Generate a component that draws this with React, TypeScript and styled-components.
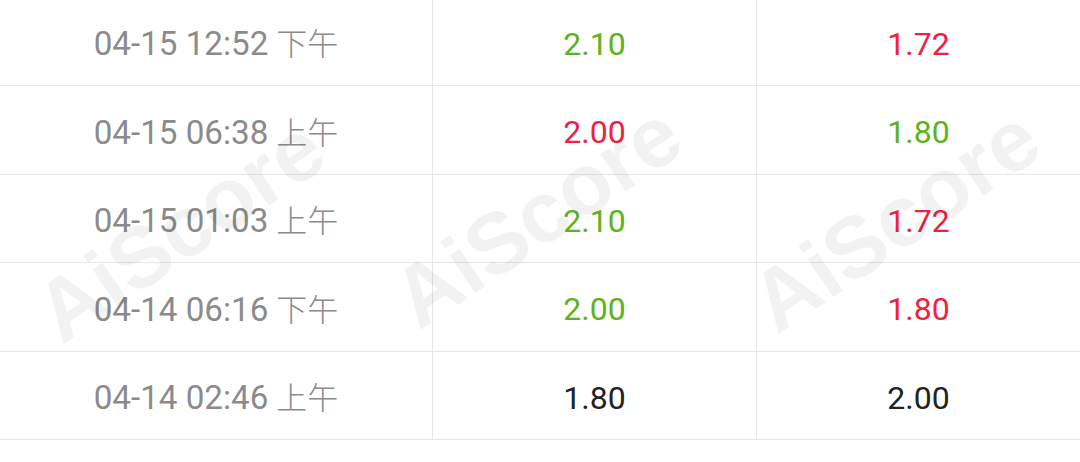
import React from "react";
import styled, { createGlobalStyle } from "styled-components";

const Global = createGlobalStyle`
  html, body { margin: 0; padding: 0; background: #ffffff; }
  body { width: 1080px; height: 462px; overflow: hidden; }
`;

const Page = styled.div`
  position: relative;
  width: 1080px;
  height: 462px;
  overflow: hidden;
  background: #fff;
`;

const Table = styled.div`
  display: flex;
  flex-direction: column;
  margin-top: -2.5px;
`;

const Row = styled.div`
  display: grid;
  grid-template-columns: 432px 324px 324px;
  height: 88.5px;
  box-sizing: border-box;
  border-bottom: 1px solid #e6e6e6;
`;

type Tone = "time" | "up" | "down" | "plain";

const toneColor: Record<Tone, string> = {
  time: "#8b8b8b",
  up: "#5cb320",
  down: "#f2203f",
  plain: "#222222",
};

const Cell = styled.div<{ $tone: Tone; $divider?: boolean }>`
  display: flex;
  align-items: center;
  justify-content: center;
  gap: 8px;
  padding-top: 5px;
  box-sizing: border-box;
  border-left: ${(p) => (p.$divider ? "1px solid #e6e6e6" : "none")};
  font-family: Roboto, "Noto Sans CJK SC", sans-serif;
  font-size: ${(p) => (p.$tone === "time" ? "33.2px" : "32px")};
  color: ${(p) => toneColor[p.$tone]};
  white-space: nowrap;
`;

const Meridiem = styled.span`
  font-family: "Noto Sans CJK SC", sans-serif;
  font-size: 31px;
  font-weight: 300;
  position: relative;
  top: -2px;
`;

const Watermark = styled.span<{ $x: number; $y: number }>`
  position: absolute;
  left: ${(p) => p.$x}px;
  top: ${(p) => p.$y}px;
  transform: translate(-50%, -50%) rotate(-34deg);
  font-family: "Liberation Sans", Arial, sans-serif;
  font-weight: 700;
  font-size: 86px;
  color: rgba(0, 0, 0, 0.05);
  pointer-events: none;
  white-space: nowrap;
`;

const rows: { time: string; ap: string; a: string; at: Tone; b: string; bt: Tone }[] = [
  { time: "04-15 12:52", ap: "下午", a: "2.10", at: "up", b: "1.72", bt: "down" },
  { time: "04-15 06:38", ap: "上午", a: "2.00", at: "down", b: "1.80", bt: "up" },
  { time: "04-15 01:03", ap: "上午", a: "2.10", at: "up", b: "1.72", bt: "down" },
  { time: "04-14 06:16", ap: "下午", a: "2.00", at: "up", b: "1.80", bt: "down" },
  { time: "04-14 02:46", ap: "上午", a: "1.80", at: "plain", b: "2.00", bt: "plain" },
];

export default function App() {
  return (
    <Page>
      <Global />
      <Table>
        {rows.map((r, i) => (
          <Row key={i}>
            <Cell $tone="time">
              <span>{r.time}</span>
              <Meridiem>{r.ap}</Meridiem>
            </Cell>
            <Cell $tone={r.at} $divider>
              {r.a}
            </Cell>
            <Cell $tone={r.bt} $divider>
              {r.b}
            </Cell>
          </Row>
        ))}
      </Table>
      <Watermark $x={180} $y={230}>AiScore</Watermark>
      <Watermark $x={537} $y={216}>AiScore</Watermark>
      <Watermark $x={895} $y={220}>AiScore</Watermark>
    </Page>
  );
}
